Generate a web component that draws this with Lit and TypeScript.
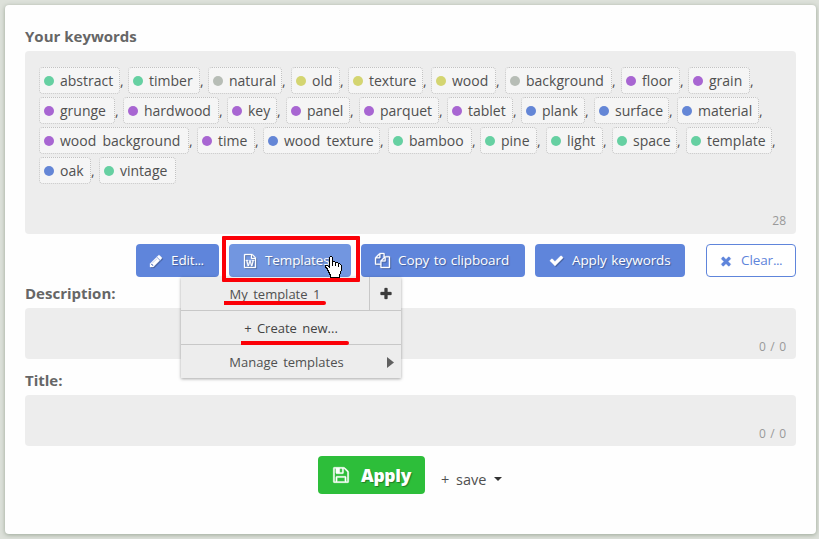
import { LitElement, html, css, svg } from "lit";
import { customElement, property } from "lit/decorators.js";
import { styleMap } from "lit/directives/style-map.js";

const ICONS: Record<string, string> = {
  pencil:
    "M491 1536l91-91-235-235-91 91v107h128v128h107zm523-928q0-22-22-22-10 0-17 7l-542 542q-7 7-7 17 0 22 22 22 10 0 17-7l542-542q7-7 7-17zm-54-192l416 416-832 832h-416v-416zm683 96q0 53-37 90l-166 166-416-416 166-165q36-38 90-38 53 0 91 38l235 234q37 39 37 91z",
  word: "M1596 380q28 28 48 76t20 88v1152q0 40-28 68t-68 28h-1344q-40 0-68-28t-28-68v-1600q0-40 28-68t68-28h896q40 0 88 20t76 48zm-444-244v376h376q-10-29-22-41l-313-313q-12-12-41-22zm384 1528v-1024h-416q-40 0-68-28t-28-68v-416h-768v1536h1280zm-1175-896v107h70l164 661h159l128-485q7-20 10-46 2-16 2-24h4l3 24q1 3 3.500 20t5.500 26l128 485h159l164-661h70v-107h-300v107h90l-99 438q-5 20-7 46l-2 21h-4q0-3-.5-6.500t-1.500-8-1-6.500q-1-5-4-21t-5-25l-144-545h-114l-144 545q-2 9-4.500 24.500t-3.500 21.500l-4 21h-4l-2-21q-2-26-7-46l-99-438h90v-107h-300z",
  copy: "M1696 384q40 0 68 28t28 68v1216q0 40-28 68t-68 28h-960q-40 0-68-28t-28-68v-288h-544q-40 0-68-28t-28-68v-672q0-40 20-88t48-76l408-408q28-28 76-48t88-20h416q40 0 68 28t28 68v328q68-40 128-40h416zm-544 213l-299 299h299v-299zm-640-384l-299 299h299v-299zm196 647l316-316v-416h-384v416q0 40-28 68t-68 28h-416v640h512v-256q0-40 20-88t48-76zm956 804v-1152h-384v416q0 40-28 68t-68 28h-416v640h896z",
  check:
    "M1671 566q0 40-28 68l-724 724-136 136q-28 28-68 28t-68-28l-136-136-362-362q-28-28-28-68t28-68l136-136q28-28 68-28t68 28l294 295 656-657q28-28 68-28t68 28l136 136q28 28 28 68z",
  times:
    "M1490 1322q0 40-28 68l-136 136q-28 28-68 28t-68-28l-294-294-294 294q-28 28-68 28t-68-28l-136-136q-28-28-28-68t28-68l294-294-294-294q-28-28-28-68t28-68l136-136q28-28 68-28t68 28l294 294 294-294q28-28 68-28t68 28l136 136q28 28 28 68t-28 68l-294 294 294 294q28 28 28 68z",
  plus: "M1600 736v192q0 40-28 68t-68 28h-416v416q0 40-28 68t-68 28h-192q-40 0-68-28t-28-68v-416h-416q-40 0-68-28t-28-68v-192q0-40 28-68t68-28h416v-416q0-40 28-68t68-28h192q40 0 68 28t28 68v416h416q40 0 68 28t28 68z",
  floppy:
    "M512 1536h768v-384h-768v384zm896 0h128v-896q0-14-10-38.500t-20-34.500l-281-281q-10-10-34-20t-39-10v416q0 40-28 68t-68 28h-576q-40 0-68-28t-28-68v-416h-128v1280h128v-416q0-40 28-68t68-28h832q40 0 68 28t28 68v416zm-384-928v-320q0-13-9.500-22.500t-22.500-9.500h-192q-13 0-22.500 9.500t-9.500 22.500v320q0 13 9.500 22.500t22.500 9.500h192q13 0 22.500-9.500t9.500-22.500zm640 32v928q0 40-28 68t-68 28h-1344q-40 0-68-28t-28-68v-1344q0-40 28-68t68-28h928q40 0 88 20t76 48l280 280q28 28 48 76t20 88z",
};

@customElement("fa-icon")
export class FaIcon extends LitElement {
  @property() name = "plus";

  static styles = css`
    :host {
      display: block;
      flex: none;
      width: 15px;
      height: 15px;
    }
    svg {
      display: block;
      width: 100%;
      height: 100%;
      fill: currentColor;
      stroke: currentColor;
      stroke-width: 40;
      overflow: visible;
    }
  `;

  render() {
    return html`<svg viewBox="0 0 1792 1792">${svg`<path d=${ICONS[this.name]}></path>`}</svg>`;
  }
}

const GREEN = "#66d0a2";
const GRAY = "#b7bdb6";
const YELLOW = "#d4d571";
const PURPLE = "#a866d2";
const BLUE = "#6486d6";

type Keyword = [text: string, color: string, width: number, gap: number];

const ROWS: Keyword[][] = [
  [
    ["abstract", GREEN, 81, 8],
    ["timber", GREEN, 72, 8],
    ["natural", GRAY, 74, 9],
    ["old", YELLOW, 49, 8],
    ["texture", YELLOW, 75, 8],
    ["wood", YELLOW, 65, 9],
    ["background", GRAY, 107, 9],
    ["floor", PURPLE, 59, 8],
    ["grain", PURPLE, 62, 8],
  ],
  [
    ["grunge", PURPLE, 76, 8],
    ["hardwood", PURPLE, 96, 8],
    ["key", PURPLE, 50, 9],
    ["panel", PURPLE, 64, 9],
    ["parquet", PURPLE, 80, 8],
    ["tablet", PURPLE, 66, 8],
    ["plank", BLUE, 64, 9],
    ["surface", BLUE, 75, 8],
    ["material", BLUE, 82, 8],
  ],
  [
    ["wood background", PURPLE, 150, 8],
    ["time", PURPLE, 58, 8],
    ["wood texture", BLUE, 117, 8],
    ["bamboo", GREEN, 84, 8],
    ["pine", GREEN, 57, 9],
    ["light", GREEN, 57, 9],
    ["space", GREEN, 65, 9],
    ["template", GREEN, 86, 8],
  ],
  [
    ["oak", BLUE, 52, 8],
    ["vintage", GREEN, 77, 8],
  ],
];

@customElement("app-root")
export class AppRoot extends LitElement {
  static styles = css`
    :host {
      display: block;
      box-sizing: border-box;
      width: 819px;
      height: 539px;
      padding: 5px 3px 5px 5px;
      background: #dde1da;
      overflow: hidden;
      font-family: "Open Sans", "Noto Sans", sans-serif;
      font-size: 14px;
      color: #505050;
    }
    * {
      box-sizing: border-box;
    }
    .card {
      position: relative;
      height: 529px;
      padding: 19px 20px 0;
      background: #fefefe;
      border-radius: 4px;
      box-shadow: 0 1px 4px rgba(90, 110, 85, 0.5);
      display: flex;
      flex-direction: column;
    }
    .label {
      font-size: 15px;
      font-weight: 700;
      color: #666;
      white-space: nowrap;
    }
    .label.keywords {
      height: 27px;
      line-height: 25px;
    }
    .label.description {
      height: 31px;
      line-height: 33px;
    }
    .label.title {
      height: 36px;
      line-height: 43px;
    }
    .box {
      display: flex;
      flex-direction: column;
      background: #ededed;
      border-radius: 4px;
      flex: none;
    }
    .box.tags {
      height: 183px;
      padding: 16px 10px 4px 14px;
      gap: 3px;
    }
    .box.field {
      height: 51px;
      padding: 0 10px 3px;
    }
    .counter {
      margin-top: auto;
      align-self: flex-end;
      font-size: 12px;
      line-height: 18px;
      word-spacing: 1.3px;
      color: #999;
    }
    .row {
      display: flex;
      height: 27px;
    }
    .tag {
      display: flex;
      align-items: center;
      flex: none;
      height: 27px;
      padding-left: 4px;
      border: 1px dotted #c2c2c2;
      border-radius: 4px;
      background: #f5f5f5;
      white-space: nowrap;
      word-spacing: 2.5px;
      line-height: 25px;
    }
    .dot {
      flex: none;
      width: 10px;
      height: 10px;
      margin-right: 6px;
      border-radius: 50%;
    }
    .comma {
      flex: none;
      line-height: 28px;
      overflow: visible;
    }
    .toolbar {
      display: flex;
      gap: 10px;
      height: 33px;
      margin: 10px 0 0 111px;
      flex: none;
    }
    .btn {
      display: flex;
      align-items: center;
      height: 33px;
      padding-left: 14px;
      border-radius: 4px;
      background: #5f85db;
      color: #fff;
      line-height: 33px;
      font-size: 13.5px;
      font-weight: 500;
      letter-spacing: -0.1px;
      word-spacing: 1px;
      white-space: nowrap;
      text-shadow: 1px 1px 1px rgba(0, 0, 0, 0.3);
    }
    .btn fa-icon {
      width: 14px;
      height: 14px;
      margin-right: 8px;
      filter: drop-shadow(1px 1px 0 rgba(0, 0, 0, 0.25));
    }
    .edit {
      width: 83px;
      padding-left: 13px;
    }
    .dots {
      letter-spacing: -0.6px;
    }
    .templates {
      width: 122px;
      background: #7296e0;
    }
    .copy {
      width: 164px;
    }
    .copy fa-icon {
      width: 15px;
      height: 15px;
    }
    .apply-keywords {
      width: 150px;
    }
    .apply-keywords fa-icon {
      width: 15px;
      height: 15px;
    }
    .clear {
      width: 90px;
      margin-left: 11px;
      border: 1px solid #5f85db;
      background: #fff;
      color: #5f85db;
      font-weight: 400;
      text-shadow: none;
      padding-left: 12px;
    }
    .clear fa-icon {
      filter: none;
      stroke-width: 120;
    }
    .actions {
      display: flex;
      margin: 10px 0 0 293px;
    }
    .apply {
      display: flex;
      align-items: center;
      width: 107px;
      height: 38px;
      padding-left: 14px;
      border-radius: 4px;
      background: #2dbe3a;
      color: #fff;
      font-size: 17.5px;
      font-weight: 800;
      letter-spacing: -0.3px;
      text-shadow: 1px 1px 1px rgba(0, 0, 0, 0.35);
    }
    .apply fa-icon {
      width: 18px;
      height: 18px;
      margin-right: 11px;
    }
    .save {
      display: flex;
      align-items: center;
      height: 46px;
      margin-left: 16px;
      font-size: 14.5px;
      word-spacing: 3px;
    }
    .caret {
      margin-left: 8px;
      border: 4px solid transparent;
      border-top-color: #333;
      border-bottom: 0;
    }
    .menu {
      position: absolute;
      left: 176px;
      top: 272px;
      width: 220px;
      background: #ededed;
      box-shadow: 0 1px 3px rgba(0, 0, 0, 0.35);
      font-size: 13px;
      word-spacing: 2px;
    }
    .item {
      display: flex;
      height: 34px;
      line-height: 34px;
      border-bottom: 1px solid #c8c8c8;
      white-space: nowrap;
    }
    .item.last {
      height: 33px;
      border-bottom: 0;
    }
    .item .text {
      flex: 1;
      text-align: center;
    }
    .create {
      color: #444;
      font-weight: 500;
    }
    .add {
      display: flex;
      align-items: center;
      justify-content: center;
      width: 32px;
      border-left: 1px solid #c8c8c8;
      color: #3c3c3c;
    }
    .add fa-icon {
      width: 14px;
      height: 14px;
    }
    .arrow {
      width: 7px;
      height: 11px;
      margin: 12px 7px 0 0;
      background: #606060;
      clip-path: polygon(0 0, 100% 50%, 0 100%);
    }
    .item.last .text {
      padding-left: 5px;
    }
    .frame {
      position: absolute;
      left: 217px;
      top: 231px;
      width: 138px;
      height: 46px;
      border: 4px solid #fb0007;
      border-radius: 1px;
    }
    .stroke {
      position: absolute;
      height: 4px;
      background: #fb0007;
      border-radius: 0 2px 2px 0;
    }
    .stroke.one {
      left: 219px;
      top: 296px;
      width: 102px;
    }
    .stroke.two {
      left: 236px;
      top: 336px;
      width: 108px;
    }
    .cursor {
      position: absolute;
      left: 320px;
      top: 251px;
      width: 17px;
      height: 22px;
    }
  `;

  private keyword([text, color, width, gap]: Keyword, last: boolean) {
    return html`<span class="tag" style=${styleMap({ width: `${width}px` })}
        ><span class="dot" style=${styleMap({ background: color })}></span>${text}</span
      >${last ? "" : html`<span class="comma" style=${styleMap({ width: `${gap}px` })}>,</span>`}`;
  }

  render() {
    return html`
      <div class="card">
        <div class="label keywords">Your keywords</div>
        <div class="box tags">
          ${ROWS.map(
            (row, r) =>
              html`<div class="row">
                ${row.map((k, i) => this.keyword(k, r === ROWS.length - 1 && i === row.length - 1))}
              </div>`
          )}
          <span class="counter">28</span>
        </div>
        <div class="toolbar">
          <div class="btn edit"><fa-icon name="pencil"></fa-icon>Edit<span class="dots">...</span></div>
          <div class="btn templates"><fa-icon name="word"></fa-icon>Templates</div>
          <div class="btn copy"><fa-icon name="copy"></fa-icon>Copy to clipboard</div>
          <div class="btn apply-keywords"><fa-icon name="check"></fa-icon>Apply keywords</div>
          <div class="btn clear"><fa-icon name="times"></fa-icon>Clear<span class="dots">...</span></div>
        </div>
        <div class="label description">Description:</div>
        <div class="box field"><span class="counter">0 / 0</span></div>
        <div class="label title">Title:</div>
        <div class="box field"><span class="counter">0 / 0</span></div>
        <div class="actions">
          <div class="apply"><fa-icon name="floppy"></fa-icon>Apply</div>
          <div class="save">+ save<span class="caret"></span></div>
        </div>

        <div class="menu">
          <div class="item">
            <span class="text">My template 1</span>
            <span class="add"><fa-icon name="plus"></fa-icon></span>
          </div>
          <div class="item create"><span class="text">+ Create new...</span></div>
          <div class="item last"><span class="text">Manage templates</span><span class="arrow"></span></div>
        </div>
        <div class="frame"></div>
        <div class="stroke one"></div>
        <div class="stroke two"></div>
        <svg class="cursor" viewBox="0 0 17 22" shape-rendering="crispEdges">
          <path
            d="M5 0h2v1h1v4h2v1h3v1h2v1h1v1h1v6h-1v3h-1v4H5v-3H4v-2H3v-2H2v-2H1v-1H0v-3h3v1h1V1h1z"
            fill="#000"
          ></path>
          <path
            d="M5 1h2v9h1V6h2v4h1V7h2v4h1V8h1v1h1v6h-1v3h-1v3H6v-3H5v-2H4v-2H3v-2H2v-1H1v-1h2v1h1v1h1z"
            fill="#fff"
          ></path>
        </svg>
      </div>
    `;
  }
}
